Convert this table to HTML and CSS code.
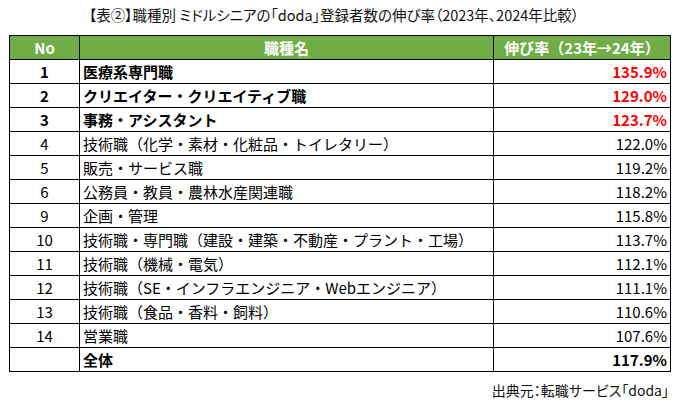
FILE: index.html
```html
<!DOCTYPE html>
<html lang="ja">
<head>
<meta charset="utf-8">
<link rel="stylesheet" href="styles.css">
</head>
<body>
<div class="page">
  <h1 class="title">【表②】職種別 ミドルシニアの「doda」登録者数の伸び率（2023年、2024年比較）</h1>
  <table class="rates">
    <colgroup>
      <col class="c-no">
      <col class="c-name">
      <col class="c-rate">
    </colgroup>
    <thead>
      <tr><th>No</th><th>職種名</th><th>伸び率（23年→24年）</th></tr>
    </thead>
    <tbody>
      <tr class="top"><td class="no">1</td><td class="name">医療系専門職</td><td class="rate">135.9%</td></tr>
      <tr class="top"><td class="no">2</td><td class="name">クリエイター・クリエイティブ職</td><td class="rate">129.0%</td></tr>
      <tr class="top"><td class="no">3</td><td class="name">事務・アシスタント</td><td class="rate">123.7%</td></tr>
      <tr><td class="no">4</td><td class="name">技術職（化学・素材・化粧品・トイレタリー）</td><td class="rate">122.0%</td></tr>
      <tr><td class="no">5</td><td class="name">販売・サービス職</td><td class="rate">119.2%</td></tr>
      <tr><td class="no">6</td><td class="name">公務員・教員・農林水産関連職</td><td class="rate">118.2%</td></tr>
      <tr><td class="no">9</td><td class="name">企画・管理</td><td class="rate">115.8%</td></tr>
      <tr><td class="no">10</td><td class="name">技術職・専門職（建設・建築・不動産・プラント・工場）</td><td class="rate">113.7%</td></tr>
      <tr><td class="no">11</td><td class="name">技術職（機械・電気）</td><td class="rate">112.1%</td></tr>
      <tr><td class="no">12</td><td class="name">技術職（SE・インフラエンジニア・Webエンジニア）</td><td class="rate">111.1%</td></tr>
      <tr><td class="no">13</td><td class="name">技術職（食品・香料・飼料）</td><td class="rate">110.6%</td></tr>
      <tr><td class="no">14</td><td class="name">営業職</td><td class="rate">107.6%</td></tr>
      <tr class="total"><td class="no"></td><td class="name">全体</td><td class="rate">117.9%</td></tr>
    </tbody>
  </table>
  <p class="source">出典元：転職サービス「doda」</p>
</div>
</body>
</html>
```

FILE: styles.css
```css
* { box-sizing: border-box; }
html, body { margin: 0; padding: 0; background: #fff; }
body {
  font-family: "Noto Sans CJK JP", "Noto Sans", sans-serif;
  color: #000;
}
.page {
  width: 682px;
  padding: 0 13px 0 9px;
}
.title {
  margin: 0;
  height: 35px;
  padding: 5px 10px 0 0;
  font-size: 14.5px;
  font-weight: 400;
  line-height: 20px;
  text-align: center;
  white-space: nowrap;
  font-feature-settings: "palt";
  color: #111;
}
.rates {
  width: 661px;
  border-collapse: collapse;
  table-layout: fixed;
  font-size: 15px;
}
.c-no { width: 70px; }
.c-name { width: 414px; }
.c-rate { width: 177px; }
.rates th, .rates td {
  border: 1px solid #000;
  height: 24px;
  padding: 0;
  line-height: 22px;
  white-space: nowrap;
  overflow: hidden;
}
.rates th {
  background: #70ad47;
  color: #fff;
  font-weight: 700;
  text-align: center;
}
.no { text-align: center; }
.name { padding-left: 3px !important; }
.rate { text-align: right; padding-right: 3px !important; }
.top td { font-weight: 700; }
.top .rate { color: #ff0000; }
.total td { font-weight: 700; }
.source {
  margin: 8px 0 0;
  text-align: right;
  font-size: 14px;
  line-height: 20px;
  font-feature-settings: "palt";
  color: #111;
}
```
